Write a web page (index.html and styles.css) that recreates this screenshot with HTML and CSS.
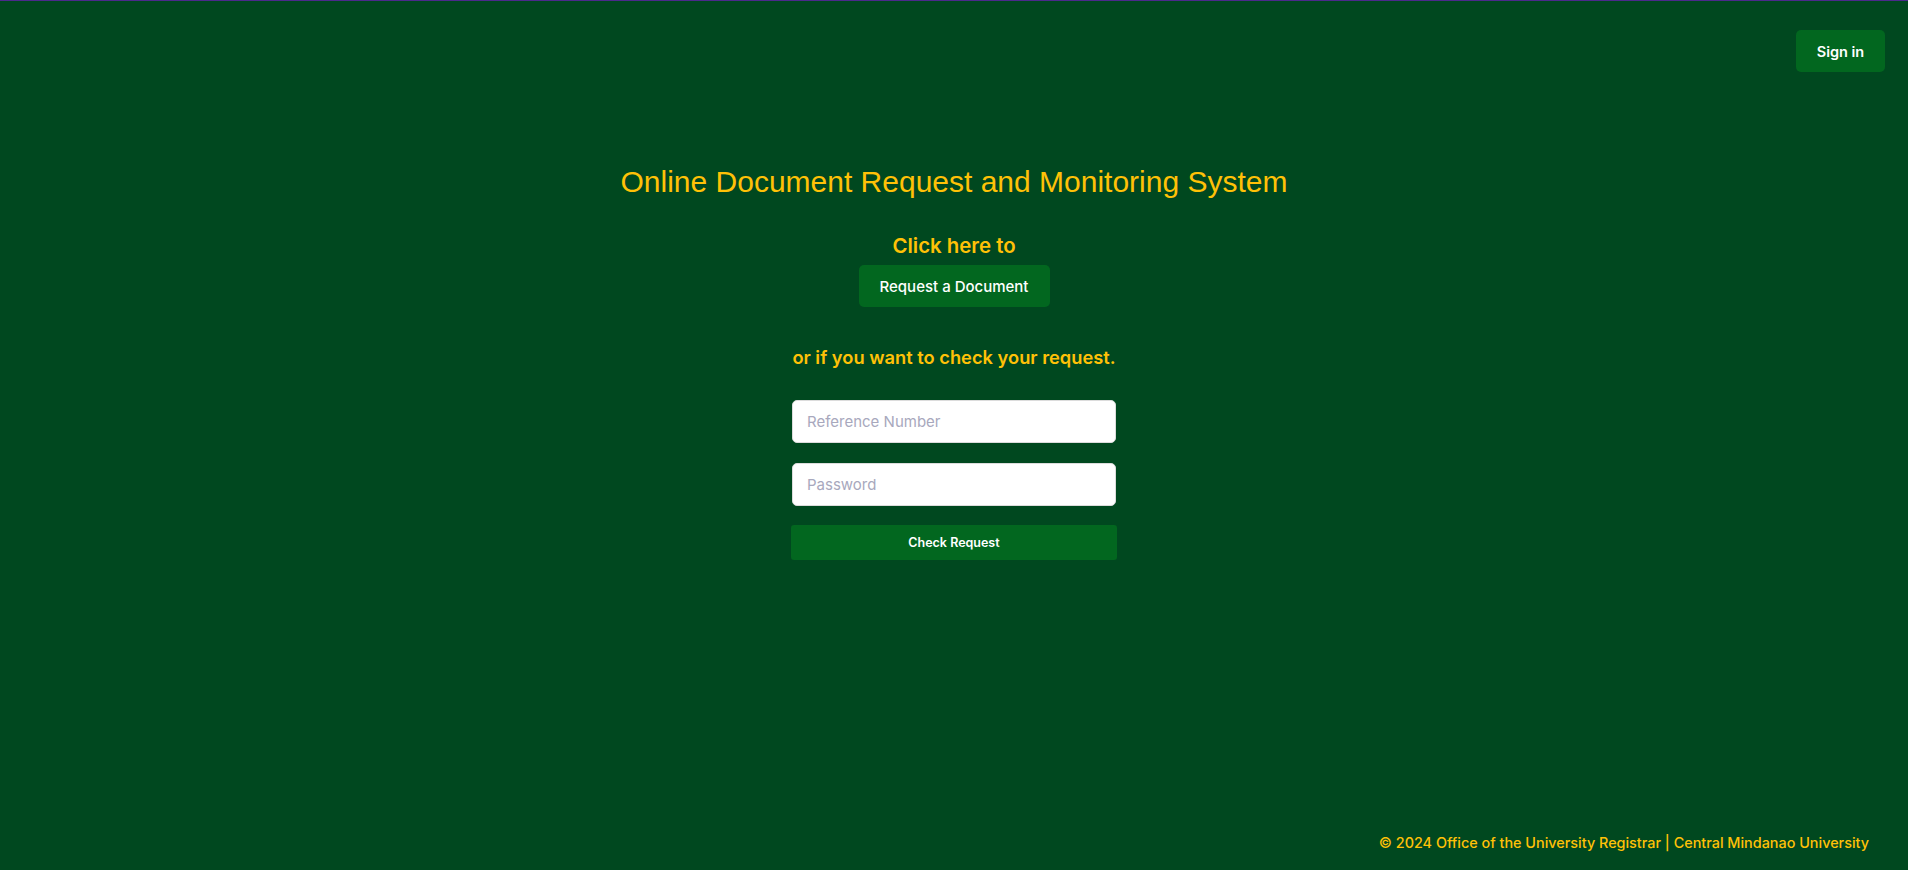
FILE: index.html
```html
<!DOCTYPE html>
<html lang="en">
<head>
<meta charset="utf-8">
<title>Online Document Request and Monitoring System</title>
<link rel="stylesheet" href="styles.css">
</head>
<body>
<div class="page">
  <header class="topbar">
    <a class="btn btn-signin" href="#">Sign in</a>
  </header>
  <main class="main">
    <h1 class="title">Online Document Request and Monitoring System</h1>
    <p class="lead">Click here to</p>
    <a class="btn btn-request" href="#">Request a Document</a>
    <p class="lead lead-check">or if you want to check your request.</p>
    <form class="check-form">
      <input class="field" type="text" placeholder="Reference Number">
      <input class="field" type="password" placeholder="Password">
      <button class="btn btn-check" type="button">Check Request</button>
    </form>
  </main>
  <footer class="footer">© 2024 Office of the University Registrar | Central Mindanao University</footer>
</div>
</body>
</html>
```

FILE: styles.css
```css
* { box-sizing: border-box; }
html, body { margin: 0; padding: 0; }
body {
  background: #00481f;
  font-family: Inter, "Open Sans", Arial, sans-serif;
  color: #fff;
}
.page {
  height: 870px;
  border-top: 1px solid #4b2a8c;
  display: flex;
  flex-direction: column;
}
.topbar {
  display: flex;
  justify-content: flex-end;
  padding: 29px 23px 0 0;
}
.btn {
  display: inline-flex;
  align-items: center;
  justify-content: center;
  background: #02671f;
  color: #fff;
  text-decoration: none;
  border: none;
  border-radius: 5px;
  font-family: inherit;
}
.btn-signin {
  width: 89px;
  height: 42px;
  font-size: 14.5px;
  font-weight: 600;
}
.main {
  flex: 1;
  display: flex;
  flex-direction: column;
  align-items: center;
}
.title {
  margin: 93px 0 0;
  font-family: "Liberation Sans", Arial, sans-serif;
  font-weight: 400;
  font-size: 30px;
  line-height: 34px;
  color: #ffc107;
}
.lead {
  margin: 0;
  color: #ffc107;
  font-weight: 600;
  font-size: 20.4px;
  line-height: 24px;
}
.title + .lead { margin-top: 35px; }
.btn-request {
  margin-top: 7px;
  width: 191px;
  height: 42px;
  font-size: 15px;
  font-weight: 500;
}
.lead-check {
  margin-top: 38px;
  font-size: 18.3px;
}
.check-form {
  margin-top: 31px;
  width: 326px;
  display: flex;
  flex-direction: column;
  align-items: center;
}
.field {
  width: 324px;
  height: 43px;
  margin-bottom: 20px;
  border: 1px solid #dcdcdc;
  border-radius: 5px;
  background: #fff;
  padding: 0 14px;
  font-family: inherit;
  font-size: 15px;
  color: #333;
  outline: none;
}
.field + .field { margin-bottom: 19px; }
.field::placeholder { color: #a8a8bd; }
.btn-check {
  width: 326px;
  height: 35px;
  font-size: 12.5px;
  font-weight: 600;
  border-radius: 3px;
  cursor: pointer;
}
.footer {
  text-align: right;
  padding: 0 39px 17px 0;
  color: #ffc107;
  font-size: 14.4px;
  font-weight: 500;
  line-height: 20px;
}
```
